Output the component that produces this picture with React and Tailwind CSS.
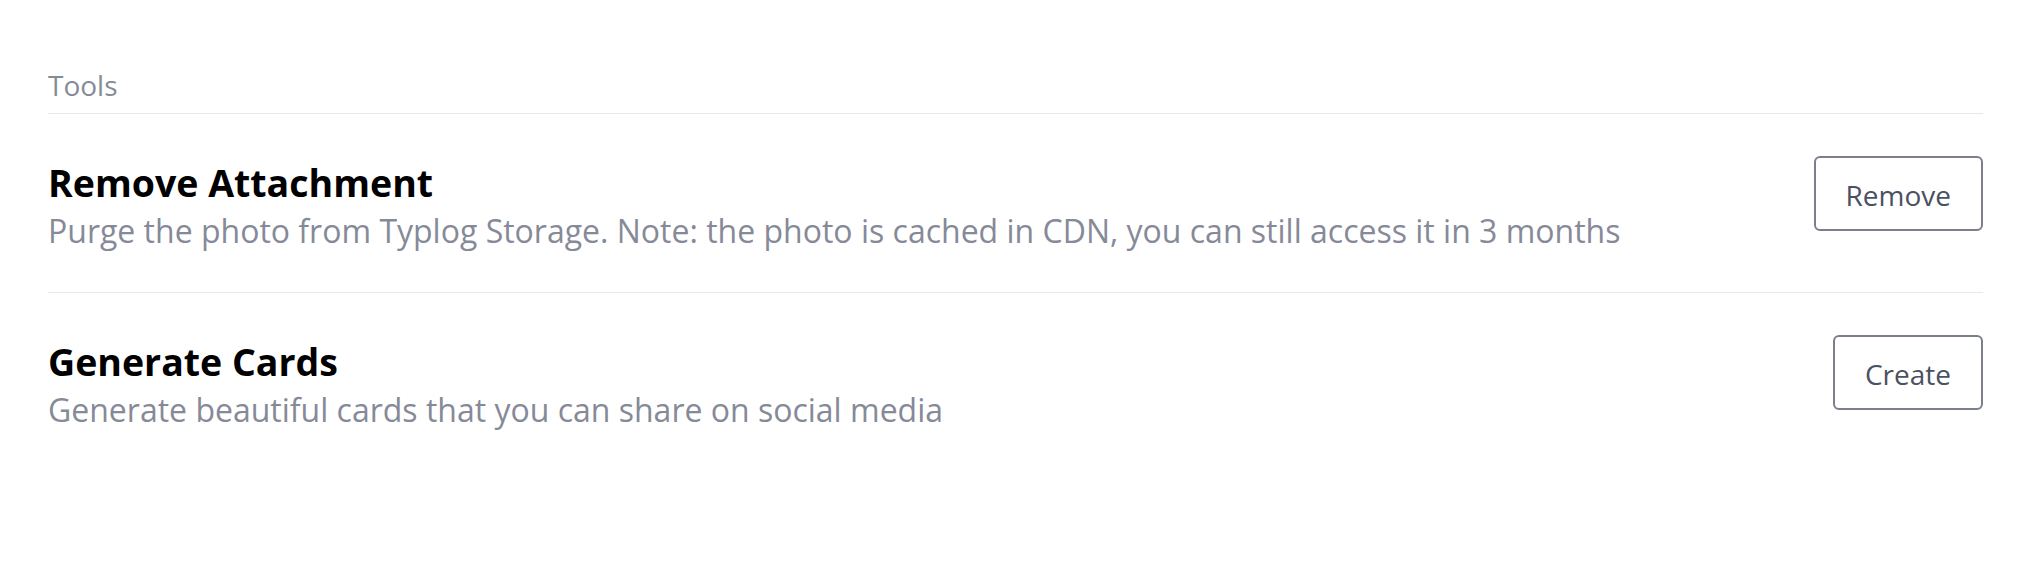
const tools = [
    {
        title: "Remove Attachment",
        description:
            "Purge the photo from Typlog Storage. Note: the photo is cached in CDN, you can still access it in 3 months",
        action: "Remove",
    },
    {
        title: "Generate Cards",
        description: "Generate beautiful cards that you can share on social media",
        action: "Create",
    },
];

export default function App() {
    return (
        <div className="min-h-screen bg-white pl-[48px] pr-[55px] pt-[64px] font-['Open_Sans',sans-serif]">
            <h2 className="text-[28px] leading-[42px] text-[#868b97] pb-[7px] border-b border-[#e8e8e8]">
                Tools
            </h2>
            {tools.map((tool, i) => (
                <div
                    key={tool.title}
                    className={
                        "flex items-start justify-between pt-[42px] pb-[37px] " +
                        (i === 0 ? "border-b border-[#e8e8e8]" : "")
                    }
                >
                    <div className="mt-[3px]">
                        <h3 className="text-[37.5px] leading-[48px] font-bold text-black">
                            {tool.title}
                        </h3>
                        <p className="text-[32px] leading-[48px] text-[#868a98]">
                            {tool.description}
                        </p>
                    </div>
                    <button className="h-[75px] px-[30px] pt-[3px] border-2 border-[#7b7f8b] rounded-[6px] text-[28px] text-[#4b5162] bg-white">
                        {tool.action}
                    </button>
                </div>
            ))}
        </div>
    );
}
